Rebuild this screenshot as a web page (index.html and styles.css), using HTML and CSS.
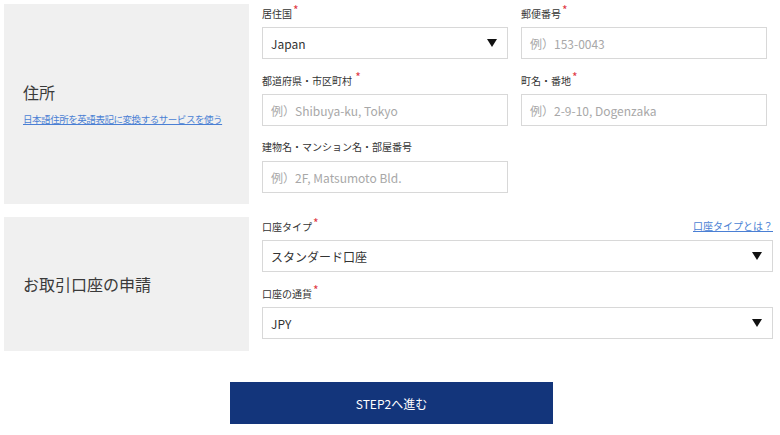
FILE: index.html
```html
<!DOCTYPE html>
<html lang="ja">
<head>
<meta charset="utf-8">
<link rel="stylesheet" href="styles.css">
</head>
<body>
<div class="page">
  <section class="section">
    <div class="side">
      <h2 class="side-title">住所</h2>
      <a class="side-link" href="#">日本語住所を英語表記に変換するサービスを使う</a>
    </div>
    <div class="fields grid2">
      <div class="field">
        <div class="label">居住国<span class="req">*</span></div>
        <div class="select"><span>Japan</span><span class="arrow"></span></div>
      </div>
      <div class="field">
        <div class="label">郵便番号<span class="req">*</span></div>
        <div class="input placeholder">例）153-0043</div>
      </div>
      <div class="field">
        <div class="label">都道府県・市区町村 <span class="req">*</span></div>
        <div class="input placeholder">例）Shibuya-ku, Tokyo</div>
      </div>
      <div class="field">
        <div class="label">町名・番地<span class="req">*</span></div>
        <div class="input placeholder">例）2-9-10, Dogenzaka</div>
      </div>
      <div class="field">
        <div class="label">建物名・マンション名・部屋番号</div>
        <div class="input placeholder">例）2F, Matsumoto Bld.</div>
      </div>
    </div>
  </section>
  <section class="section">
    <div class="side">
      <h2 class="side-title">お取引口座の申請</h2>
    </div>
    <div class="fields single">
      <div class="field">
        <div class="label label-row"><span>口座タイプ<span class="req">*</span></span><a class="help-link" href="#">口座タイプとは？</a></div>
        <div class="select"><span>スタンダード口座</span><span class="arrow"></span></div>
      </div>
      <div class="field">
        <div class="label">口座の通貨<span class="req">*</span></div>
        <div class="select"><span>JPY</span><span class="arrow"></span></div>
      </div>
    </div>
  </section>
  <div class="actions">
    <button class="next-btn" type="button">STEP2へ進む</button>
  </div>
</div>
</body>
</html>
```

FILE: styles.css
```css
* { box-sizing: border-box; }
html, body { margin: 0; padding: 0; background: #fff; }
body {
  font-family: "Noto Sans CJK JP", "Noto Sans", sans-serif;
  color: #333;
  width: 780px;
  height: 435px;
  overflow: hidden;
}
.page {
  padding: 4px 0 0 4px;
  display: flex;
  flex-direction: column;
  gap: 13px;
}
.section {
  display: flex;
  gap: 13px;
}
.side {
  width: 245px;
  flex: none;
  background: #f0f0f0;
  display: flex;
  flex-direction: column;
  justify-content: center;
  padding-left: 19px;
}
.side-title {
  margin: 0;
  font-size: 16px;
  font-weight: normal;
  line-height: 20px;
  color: #3a3a3a;
}
.side-link {
  margin-top: 10px;
  font-size: 9.5px;
  line-height: 14px;
  color: #4a7fd4;
  text-decoration: underline;
  letter-spacing: -0.45px;
}
.fields {
  width: 511px;
  display: grid;
  row-gap: 12px;
}
.grid2 {
  grid-template-columns: 246px 246px;
  column-gap: 13px;
  padding-bottom: 11px;
}
.single {
  grid-template-columns: 1fr;
  padding-bottom: 12px;
}
.field {
  display: flex;
  flex-direction: column;
}
.label {
  font-size: 10px;
  line-height: 18px;
  height: 18px;
  margin-bottom: 5px;
  color: #333;
  white-space: nowrap;
}
.label-row {
  display: flex;
  justify-content: space-between;
}
.req {
  color: #e03a45;
  font-size: 12px;
  position: relative;
  top: -3px;
  margin-left: 1px;
}
.help-link {
  color: #4a7fd4;
  text-decoration: underline;
  font-size: 10px;
}
.input, .select {
  height: 32px;
  border: 1px solid #d8d8d8;
  background: #fff;
  font-size: 12px;
  padding: 0 10px 0 8px;
  display: flex;
  align-items: center;
  color: #333;
}
.placeholder { color: #a8a8a8; }
.select { justify-content: space-between; }
.arrow {
  width: 0;
  height: 0;
  border-left: 5px solid transparent;
  border-right: 5px solid transparent;
  border-top: 8px solid #111;
}
.actions {
  display: flex;
  padding-left: 226px;
  margin-top: 18px;
}
.next-btn {
  width: 323px;
  height: 42px;
  border: none;
  background: #13357b;
  color: #fff;
  font-family: "Noto Sans CJK JP", "Noto Sans", sans-serif;
  font-size: 12px;
}
```
